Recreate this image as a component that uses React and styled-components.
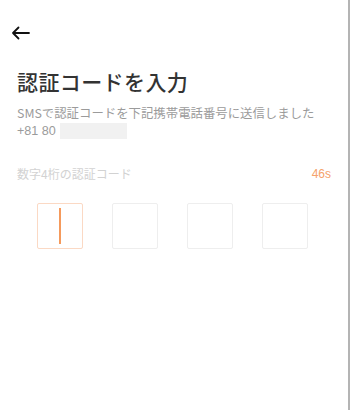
import styled, { createGlobalStyle } from "styled-components";

const GlobalStyle = createGlobalStyle`
  html, body {
    margin: 0;
    padding: 0;
    background: #fff;
  }
  body {
    font-family: "Noto Sans CJK JP", "Noto Sans", sans-serif;
  }
`;

const Screen = styled.div`
  width: 348px;
  height: 410px;
  border-right: 2px solid #b4b4b4;
  background: #fff;
  position: relative;
  overflow: hidden;
`;

const TopBar = styled.div`
  height: 66px;
  display: flex;
  align-items: center;
  padding-left: 11px;
`;

const BackButton = styled.button`
  border: none;
  background: none;
  padding: 0;
  width: 20px;
  height: 16px;
  display: flex;
  align-items: center;
  cursor: pointer;
`;

const Content = styled.div`
  padding: 0 17px;
`;

const Title = styled.h1`
  margin: 0;
  font-size: 21px;
  font-weight: 500;
  color: #333;
  line-height: 30px;
  letter-spacing: 0.4px;
`;

const Subtitle = styled.p`
  margin: 8px 0 0;
  font-size: 12.4px;
  color: #9b9b9b;
  line-height: 18px;
`;

const Phone = styled.div`
  display: flex;
  align-items: center;
  font-size: 12.6px;
  color: #9b9b9b;
  line-height: 18px;
  font-family: "Liberation Sans", "Noto Sans CJK JP", sans-serif;
`;

const Masked = styled.span`
  display: inline-block;
  width: 67px;
  height: 16px;
  margin-left: 4px;
  background: #f1f1f1;
`;

const LabelRow = styled.div`
  display: flex;
  justify-content: space-between;
  align-items: center;
  margin-top: 25px;
`;

const Label = styled.span`
  font-size: 12px;
  color: #d2d2d2;
`;

const Timer = styled.span`
  font-size: 12px;
  color: #f5a26b;
  font-family: "Liberation Sans", sans-serif;
`;

const Boxes = styled.div`
  display: flex;
  gap: 29px;
  margin-top: 21px;
  padding-left: 20px;
`;

const CodeBox = styled.div`
  width: 44px;
  height: 44px;
  border: 1px solid ${(props) => (props.active ? "#fbd9c4" : "#eeeeee")};
  border-radius: 2px;
  display: flex;
  align-items: center;
  justify-content: center;
`;

const Caret = styled.div`
  width: 2px;
  height: 36px;
  background: #f59a5c;
`;

const App = () => {
  return (
    <>
      <GlobalStyle />
      <Screen>
        <TopBar>
          <BackButton aria-label="back">
            <svg width="19" height="14" viewBox="0 0 19 14">
              <path
                d="M18 7H2M7.5 1.5L2 7l5.5 5.5"
                fill="none"
                stroke="#111"
                strokeWidth="1.8"
                strokeLinecap="round"
                strokeLinejoin="round"
              />
            </svg>
          </BackButton>
        </TopBar>
        <Content>
          <Title>認証コードを入力</Title>
          <Subtitle>SMSで認証コードを下記携帯電話番号に送信しました</Subtitle>
          <Phone>
            +81 80<Masked />
          </Phone>
          <LabelRow>
            <Label>数字4桁の認証コード</Label>
            <Timer>46s</Timer>
          </LabelRow>
          <Boxes>
            <CodeBox active>
              <Caret />
            </CodeBox>
            <CodeBox />
            <CodeBox />
            <CodeBox />
          </Boxes>
        </Content>
      </Screen>
    </>
  );
};

export default App;
